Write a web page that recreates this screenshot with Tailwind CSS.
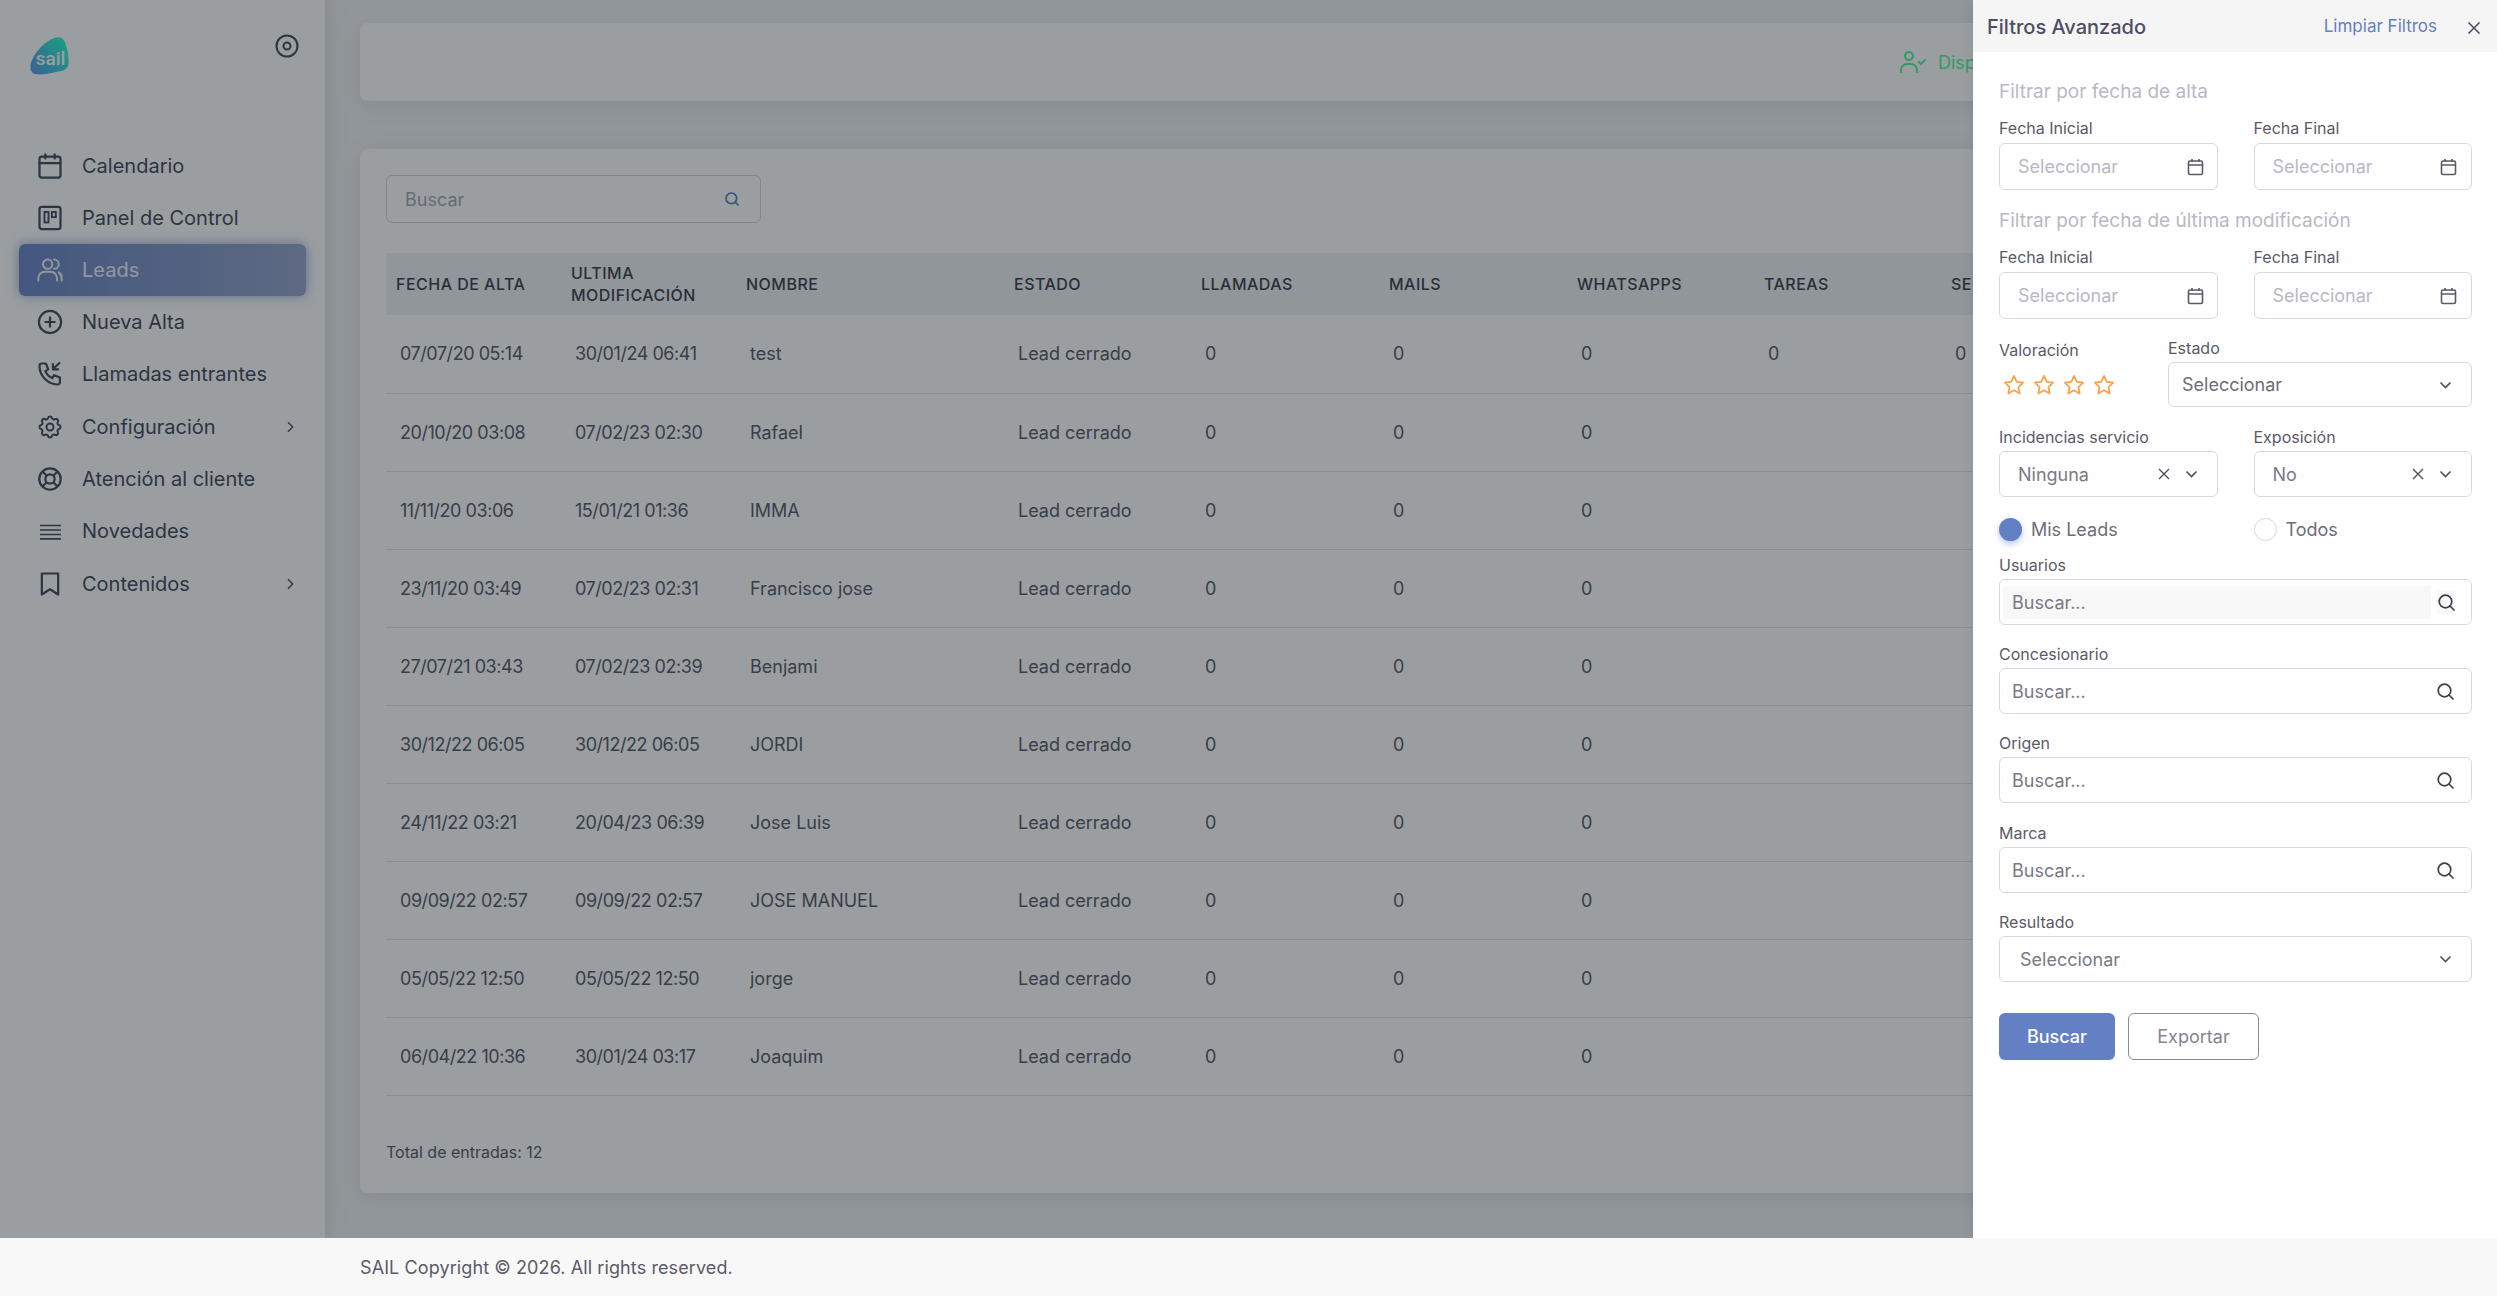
<!DOCTYPE html>
<html lang="es">
<head>
    <meta charset="UTF-8">
    <title>SAIL - Leads</title>
    <script src="https://cdn.jsdelivr.net/npm/@tailwindcss/browser@4"></script>
</head>
<body class="font-['Inter',sans-serif] text-[#4a5060] bg-white">
<div class="flex flex-col h-screen w-full overflow-hidden">
    <div class="relative flex-1 flex overflow-hidden min-h-0">
        <!-- sidebar -->
        <aside class="w-[325px] shrink-0 bg-white shadow-[0_0_30px_rgba(0,0,0,0.06)] z-10">
            <div class="flex justify-between pl-[30px] pr-[26px] pt-[34px] h-[140px]">
                <svg class="mt-[3px]" width="39" height="38" viewBox="0 0 39 38">
                    <defs><linearGradient id="lg" x1="0" y1="1" x2="1" y2="0.3"><stop offset="0" stop-color="#6496e7"/><stop offset="1" stop-color="#2bfad5"/></linearGradient></defs>
                    <path d="M0.5 28 C2 19 12 6 24 1 C30 -1 34 1 36 8 C38 15 39.5 24 38 29 C36.5 33 32 34 26 35 C18 37 10 38 5 37 C1.5 36 0 33 0.5 28 Z" fill="url(#lg)"/>
                    <text x="20.5" y="28" text-anchor="middle" font-family="Roboto, sans-serif" font-size="19" font-weight="500" fill="#fff">sail</text>
                </svg>
                <svg width="24" height="24" viewBox="0 0 24 24" fill="none" stroke="#4a5060" stroke-width="2"><circle cx="12" cy="12" r="10.5"/><circle cx="12" cy="12" r="3.5"/></svg>
            </div>
            <nav class="flex flex-col text-[20px] px-[19px] pt-0">
                <a class="flex items-center h-[52px] pl-[17px]"><svg class="w-[28px] h-[28px] mr-[18px]" viewBox="0 0 24 24" fill="none" stroke="currentColor" stroke-width="1.9" stroke-linecap="round"><rect x="3" y="4" width="18" height="18" rx="2"/><path d="M3 9.5h18M8 2v3.5M16 2v3.5"/></svg>Calendario</a>
                <a class="flex items-center h-[52px] pl-[17px]"><svg class="w-[28px] h-[28px] mr-[18px]" viewBox="0 0 24 24" fill="none" stroke="currentColor" stroke-width="1.9"><rect x="3" y="2.5" width="18" height="19" rx="2"/><rect x="7.3" y="6.8" width="3.4" height="9" stroke-width="1.6"/><rect x="13.6" y="6.8" width="3.4" height="4.5" stroke-width="1.6"/></svg>Panel de Control</a>
                <a class="flex items-center h-[52px] pl-[17px] rounded-md bg-gradient-to-r from-[#7189c6] to-[#9aa8cc] text-white/90 shadow-[0_0_12px_rgba(113,137,198,0.7)]"><svg class="w-[28px] h-[28px] mr-[18px]" viewBox="0 0 24 24" fill="none" stroke="currentColor" stroke-width="1.7" stroke-linecap="round"><circle cx="10" cy="7" r="4"/><path d="M2 21v-2a5.5 5.5 0 0 1 5.5-5.5h5a5.5 5.5 0 0 1 5.5 5.5v2M15.5 3a4 4 0 0 1 0 8M19.5 14a5.5 5.5 0 0 1 2.5 5v2"/></svg>Leads</a>
                <a class="flex items-center h-[52px] pl-[17px]"><svg class="w-[28px] h-[28px] mr-[18px]" viewBox="0 0 24 24" fill="none" stroke="currentColor" stroke-width="1.9" stroke-linecap="round"><circle cx="12" cy="12" r="9.5"/><path d="M12 8v8M8 12h8"/></svg>Nueva Alta</a>
                <a class="flex items-center h-[52px] pl-[17px]"><svg class="w-[28px] h-[28px] mr-[18px]" viewBox="0 0 24 24" fill="none" stroke="currentColor" stroke-width="1.9" stroke-linecap="round" stroke-linejoin="round"><path d="M5 3h3.5l2 5-2.500 1.5a11 11 0 0 0 6 6l1.500-2.500 5 2v3.500a2 2 0 0 1-2 2.500A16 16 0 0 1 3 5a2 2 0 0 1 2-2"/><path d="M20 2.500l-5.500 5.500M14.500 3.500V8H19"/></svg>Llamadas entrantes</a>
                <a class="flex items-center h-[52px] mt-[1px] pl-[17px]"><svg class="w-[28px] h-[28px] mr-[18px]" viewBox="0 0 24 24" fill="none" stroke="currentColor" stroke-width="1.7" stroke-linecap="round" stroke-linejoin="round"><path d="M10.3 4.3c.4-1.8 3-1.8 3.4 0a1.7 1.7 0 0 0 2.6 1c1.5-.9 3.3.8 2.4 2.4a1.7 1.7 0 0 0 1 2.6c1.8.4 1.8 3 0 3.4a1.7 1.7 0 0 0-1 2.6c.9 1.5-.8 3.3-2.4 2.4a1.7 1.7 0 0 0-2.6 1c-.4 1.8-3 1.8-3.4 0a1.7 1.7 0 0 0-2.6-1c-1.5.9-3.3-.8-2.4-2.4a1.7 1.7 0 0 0-1-2.6c-1.8-.4-1.8-3 0-3.4a1.7 1.7 0 0 0 1-2.6c-.9-1.5.8-3.3 2.4-2.4a1.7 1.7 0 0 0 2.6-1"/><circle cx="12" cy="12" r="3"/></svg>Configuración<svg class="ml-auto mr-[8px] w-[16px] h-[16px]" viewBox="0 0 24 24" fill="none" stroke="currentColor" stroke-width="2"><path d="M9 5l7 7-7 7"/></svg></a>
                <a class="flex items-center h-[52px] pl-[17px]"><svg class="w-[28px] h-[28px] mr-[18px]" viewBox="0 0 24 24" fill="none" stroke="currentColor" stroke-width="1.9"><circle cx="12" cy="12" r="9.2"/><circle cx="12" cy="12" r="4"/><path d="M5.5 5.5l3.700 3.700M18.500 5.500l-3.700 3.700M5.500 18.500l3.700-3.700M18.500 18.500l-3.700-3.700"/></svg>Atención al cliente</a>
                <a class="flex items-center h-[52px] pl-[17px]"><svg class="w-[28px] h-[28px] mr-[18px]" viewBox="0 0 24 24" fill="none" stroke="currentColor" stroke-width="1.4"><path d="M3.4 7.300h18M3.400 11.100h18M3.400 15h18M3.400 18.800h18"/></svg>Novedades</a>
                <a class="flex items-center h-[53px] pl-[17px]"><svg class="w-[28px] h-[28px] mr-[18px]" viewBox="0 0 24 24" fill="none" stroke="currentColor" stroke-width="1.9" stroke-linejoin="round"><path d="M5 3h14v18l-7-4.500L5 21z"/></svg>Contenidos<svg class="ml-auto mr-[8px] w-[16px] h-[16px]" viewBox="0 0 24 24" fill="none" stroke="currentColor" stroke-width="2"><path d="M9 5l7 7-7 7"/></svg></a>
            </nav>
        </aside>

        <!-- main -->
        <main class="flex-1 min-w-0 bg-[#f1f2f3] pl-[35px] pt-[23px] shadow-[inset_12px_0_12px_-10px_rgba(0,0,0,0.05)]">
            <div class="h-[78px] w-[2200px] rounded-lg bg-white shadow-[0_4px_24px_rgba(0,0,0,0.08)] flex items-center pl-[1540px] text-[#52f896] text-[18px]">
                <svg class="w-[26px] h-[24px] mr-[12px]" viewBox="0 0 26 24" fill="none" stroke="currentColor" stroke-width="2" stroke-linecap="round"><circle cx="9" cy="6" r="4"/><path d="M1 22v-2a6 6 0 0 1 6-6h4a6 6 0 0 1 6 6v2M19 12l2 2 4-4"/></svg>Disponible
            </div>
            <div class="mt-[48px] h-[1044px] w-[2200px] rounded-lg bg-white shadow-[0_4px_24px_rgba(0,0,0,0.08)] px-[26px] pt-[26px]">
                <div class="w-[375px] h-[48px] border border-[#d6d8dc] rounded-md flex items-center justify-between pl-[18px] pr-[20px] text-[#a8acb3] text-[18px]">Buscar
                    <svg class="w-[16px] h-[16px] text-[#5f7fc5]" viewBox="0 0 24 24" fill="none" stroke="currentColor" stroke-width="2.5" stroke-linecap="round"><circle cx="11" cy="11" r="8"/><path d="M21 21l-4-4"/></svg>
                </div>
                <table class="mt-[30px] table-fixed w-[1742px] border-collapse text-left text-[18px] text-[#5c616b]">
                    <colgroup><col class="w-[175px]"><col class="w-[175px]"><col class="w-[268px]"><col class="w-[187px]"><col class="w-[188px]"><col class="w-[188px]"><col class="w-[187px]"><col class="w-[187px]"><col class="w-[187px]"></colgroup>
                    <thead class="bg-[#f1f2f3] text-[16px] leading-[22px] text-[#444750] uppercase tracking-[0.03em]">
                        <tr class="h-[62px]">
                            <th class="font-medium pl-[10px]">Fecha de alta</th><th class="font-medium pl-[10px]">Ultima modificación</th><th class="font-medium pl-[10px]">Nombre</th><th class="font-medium pl-[10px]">Estado</th><th class="font-medium pl-[10px]">Llamadas</th><th class="font-medium pl-[10px]">Mails</th><th class="font-medium pl-[10px]">Whatsapps</th><th class="font-medium pl-[10px]">Tareas</th><th class="font-medium pl-[10px]">Seg</th>
                        </tr>
                    </thead>
                    <tbody class="[&_td]:pl-[14px] [&_td:nth-child(-n+2)]:tracking-[-0.45px] [&_tr]:h-[78px] [&_tr]:border-b [&_tr]:border-[#e4e5e8]">
                        <tr><td>07/07/20 05:14</td><td>30/01/24 06:41</td><td>test</td><td>Lead cerrado</td><td>0</td><td>0</td><td>0</td><td>0</td><td>0</td></tr>
                        <tr><td>20/10/20 03:08</td><td>07/02/23 02:30</td><td>Rafael</td><td>Lead cerrado</td><td>0</td><td>0</td><td>0</td><td></td><td></td></tr>
                        <tr><td>11/11/20 03:06</td><td>15/01/21 01:36</td><td>IMMA</td><td>Lead cerrado</td><td>0</td><td>0</td><td>0</td><td></td><td></td></tr>
                        <tr><td>23/11/20 03:49</td><td>07/02/23 02:31</td><td>Francisco jose</td><td>Lead cerrado</td><td>0</td><td>0</td><td>0</td><td></td><td></td></tr>
                        <tr><td>27/07/21 03:43</td><td>07/02/23 02:39</td><td>Benjami</td><td>Lead cerrado</td><td>0</td><td>0</td><td>0</td><td></td><td></td></tr>
                        <tr><td>30/12/22 06:05</td><td>30/12/22 06:05</td><td>JORDI</td><td>Lead cerrado</td><td>0</td><td>0</td><td>0</td><td></td><td></td></tr>
                        <tr><td>24/11/22 03:21</td><td>20/04/23 06:39</td><td>Jose Luis</td><td>Lead cerrado</td><td>0</td><td>0</td><td>0</td><td></td><td></td></tr>
                        <tr><td>09/09/22 02:57</td><td>09/09/22 02:57</td><td>JOSE MANUEL</td><td>Lead cerrado</td><td>0</td><td>0</td><td>0</td><td></td><td></td></tr>
                        <tr><td>05/05/22 12:50</td><td>05/05/22 12:50</td><td>jorge</td><td>Lead cerrado</td><td>0</td><td>0</td><td>0</td><td></td><td></td></tr>
                        <tr><td>06/04/22 10:36</td><td>30/01/24 03:17</td><td>Joaquim</td><td>Lead cerrado</td><td>0</td><td>0</td><td>0</td><td></td><td></td></tr>
                    </tbody>
                </table>
                <p class="mt-[44px] text-[16px] leading-[24px] text-[#5c616b]">Total de entradas: 12</p>
            </div>
        </main>

        <!-- backdrop -->
        <div class="absolute inset-0 bg-[#020c14]/40 z-20"></div>

        <!-- filtros drawer -->
        <div class="absolute right-0 top-0 bottom-0 w-[524px] bg-white z-30 text-[#5b5a66] shadow-[0_0_10px_rgba(0,0,0,0.08)]">
            <div class="h-[52px] bg-[#f5f5f5] flex items-center pl-[14px] pr-[16px] pt-[1px]">
                <span class="text-[20px] font-medium text-[#4f4d63]">Filtros Avanzado</span>
                <span class="ml-auto text-[17px] text-[#6480c4]">Limpiar Filtros</span>
                <svg class="ml-[30px] mt-[2px] w-[14px] h-[14px]" viewBox="0 0 14 14" fill="none" stroke="#4f4d63" stroke-width="1.6"><path d="M1.5 1.5l11 11M12.5 1.5l-11 11"/></svg>
            </div>
            <div class="pl-[26px] pr-[25px] pt-[26px] text-[16px]">
                <div class="h-7 leading-7 text-[19px] text-[#b9b8c3]">Filtrar por fecha de alta</div>
                <div class="grid grid-cols-2 gap-x-[36px] mt-[11px]">
                    <div>
                        <label class="block h-[22px] leading-[22px]">Fecha Inicial</label>
                        <div class="mt-[4px] h-[47px] border border-[#d8d8e0] rounded-md flex items-center justify-between pl-[18px] pr-[13px] text-[18px] text-[#b9b8c3]">Seleccionar<svg class="w-[17px] h-[18px]" viewBox="0 0 17 18" fill="none" stroke="#5b5a66" stroke-width="1.6"><rect x="1.5" y="3" width="14" height="13.5" rx="1.5"/><path d="M1.5 7h14M5 1v3M12 1v3"/></svg></div>
                    </div>
                    <div>
                        <label class="block h-[22px] leading-[22px]">Fecha Final</label>
                        <div class="mt-[4px] h-[47px] border border-[#d8d8e0] rounded-md flex items-center justify-between pl-[18px] pr-[14px] text-[18px] text-[#b9b8c3]">Seleccionar<svg class="w-[17px] h-[18px]" viewBox="0 0 17 18" fill="none" stroke="#5b5a66" stroke-width="1.6"><rect x="1.5" y="3" width="14" height="13.5" rx="1.5"/><path d="M1.5 7h14M5 1v3M12 1v3"/></svg></div>
                    </div>
                </div>
                <div class="h-7 leading-7 mt-[17px] text-[19px] text-[#b9b8c3]">Filtrar por fecha de última modificación</div>
                <div class="grid grid-cols-2 gap-x-[36px] mt-[11px]">
                    <div>
                        <label class="block h-[22px] leading-[22px]">Fecha Inicial</label>
                        <div class="mt-[4px] h-[47px] border border-[#d8d8e0] rounded-md flex items-center justify-between pl-[18px] pr-[13px] text-[18px] text-[#b9b8c3]">Seleccionar<svg class="w-[17px] h-[18px]" viewBox="0 0 17 18" fill="none" stroke="#5b5a66" stroke-width="1.6"><rect x="1.5" y="3" width="14" height="13.5" rx="1.5"/><path d="M1.5 7h14M5 1v3M12 1v3"/></svg></div>
                    </div>
                    <div>
                        <label class="block h-[22px] leading-[22px]">Fecha Final</label>
                        <div class="mt-[4px] h-[47px] border border-[#d8d8e0] rounded-md flex items-center justify-between pl-[18px] pr-[14px] text-[18px] text-[#b9b8c3]">Seleccionar<svg class="w-[17px] h-[18px]" viewBox="0 0 17 18" fill="none" stroke="#5b5a66" stroke-width="1.6"><rect x="1.5" y="3" width="14" height="13.5" rx="1.5"/><path d="M1.5 7h14M5 1v3M12 1v3"/></svg></div>
                    </div>
                </div>
                <div class="flex mt-[18px]">
                    <div class="w-[169px] pt-[2px]">
                        <label class="block h-[22px] leading-[22px]">Valoración</label>
                        <div class="flex gap-[8px] mt-[13px] pl-[4px]">
                            <svg class="w-[22px] h-[22px]" viewBox="0 0 24 24" fill="none" stroke="#f9a14a" stroke-width="1.9" stroke-linejoin="round"><path d="M12 2l3 6.6 7 .8-5.2 4.8 1.4 7.1L12 17.8l-6.2 3.500 1.400-7.100L2 9.400l7-.8z"/></svg>
                            <svg class="w-[22px] h-[22px]" viewBox="0 0 24 24" fill="none" stroke="#f9a14a" stroke-width="1.9" stroke-linejoin="round"><path d="M12 2l3 6.6 7 .8-5.2 4.8 1.4 7.1L12 17.8l-6.2 3.500 1.400-7.100L2 9.400l7-.8z"/></svg>
                            <svg class="w-[22px] h-[22px]" viewBox="0 0 24 24" fill="none" stroke="#f9a14a" stroke-width="1.9" stroke-linejoin="round"><path d="M12 2l3 6.6 7 .8-5.2 4.8 1.4 7.1L12 17.8l-6.2 3.500 1.400-7.100L2 9.400l7-.8z"/></svg>
                            <svg class="w-[22px] h-[22px]" viewBox="0 0 24 24" fill="none" stroke="#f9a14a" stroke-width="1.9" stroke-linejoin="round"><path d="M12 2l3 6.6 7 .8-5.2 4.8 1.4 7.1L12 17.8l-6.2 3.500 1.400-7.100L2 9.400l7-.8z"/></svg>
                        </div>
                    </div>
                    <div class="flex-1">
                        <label class="block h-[22px] leading-[22px]">Estado</label>
                        <div class="mt-[3px] h-[45px] border border-[#d8d8e0] rounded-md flex items-center justify-between pl-[13px] pr-[19px] text-[18px] text-[#6e6d78]">Seleccionar<svg class="w-[13px] h-[8px]" viewBox="0 0 13 8" fill="none" stroke="#4f4d63" stroke-width="1.6"><path d="M1.5 1.5l5 5 5-5"/></svg></div>
                    </div>
                </div>
                <div class="grid grid-cols-2 gap-x-[36px] mt-[19px]">
                    <div>
                        <label class="block h-[22px] leading-[22px]">Incidencias servicio</label>
                        <div class="mt-[3px] h-[46px] border border-[#d8d8e0] rounded-md flex items-center pl-[18px] pr-[19px] text-[18px] text-[#7a7985]">Ninguna<svg class="ml-auto mr-[15px] w-[12px] h-[12px]" viewBox="0 0 12 12" fill="none" stroke="#4f4d63" stroke-width="1.4"><path d="M1 1l10 10M11 1L1 11"/></svg><svg class="w-[13px] h-[8px]" viewBox="0 0 13 8" fill="none" stroke="#4f4d63" stroke-width="1.6"><path d="M1.5 1.5l5 5 5-5"/></svg></div>
                    </div>
                    <div>
                        <label class="block h-[22px] leading-[22px]">Exposición</label>
                        <div class="mt-[3px] h-[46px] border border-[#d8d8e0] rounded-md flex items-center pl-[18px] pr-[19px] text-[18px] text-[#7a7985]">No<svg class="ml-auto mr-[15px] w-[12px] h-[12px]" viewBox="0 0 12 12" fill="none" stroke="#4f4d63" stroke-width="1.4"><path d="M1 1l10 10M11 1L1 11"/></svg><svg class="w-[13px] h-[8px]" viewBox="0 0 13 8" fill="none" stroke="#4f4d63" stroke-width="1.6"><path d="M1.5 1.5l5 5 5-5"/></svg></div>
                    </div>
                </div>
                <div class="grid grid-cols-2 gap-x-[36px] mt-[19px] h-[23px] text-[18px] text-[#6e6d78]">
                    <div class="flex items-center gap-[9px]"><span class="w-[23px] h-[23px] rounded-full bg-[#6480c4] shadow-[0_3px_6px_rgba(100,128,196,0.45)]"></span>Mis Leads</div>
                    <div class="flex items-center gap-[9px]"><span class="w-[23px] h-[23px] rounded-full border border-[#d8d8e0]"></span>Todos</div>
                </div>
                <div class="mt-[15px]">
                    <label class="block h-[22px] leading-[22px]">Usuarios</label>
                    <div class="mt-[3px] h-[46px] border border-[#d8d8e0] rounded-md flex items-center pl-[3px] pr-[15px] text-[18px] text-[#7a7985]">
                        <span class="flex-1 h-[33px] bg-[#f8f8f8] flex items-center pl-[9px]">Buscar...</span>
                        <span class="ml-[6px] w-[19px] h-[24px] bg-[#f8f8f8] flex items-center justify-center"><svg class="w-[17px] h-[17px] shrink-0" viewBox="0 0 17 17" fill="none" stroke="#3f3e4c" stroke-width="1.7" stroke-linecap="round"><circle cx="7.5" cy="7.5" r="6.3"/><path d="M16 16l-4-4"/></svg></span>
                    </div>
                </div>
                <div class="mt-[18px]">
                    <label class="block h-[22px] leading-[22px]">Concesionario</label>
                    <div class="mt-[3px] h-[46px] border border-[#d8d8e0] rounded-md flex items-center justify-between pl-[12px] pr-[17px] text-[18px] text-[#7a7985]">Buscar...<svg class="w-[17px] h-[17px]" viewBox="0 0 17 17" fill="none" stroke="#3f3e4c" stroke-width="1.7" stroke-linecap="round"><circle cx="7.5" cy="7.5" r="6.3"/><path d="M16 16l-4-4"/></svg></div>
                </div>
                <div class="mt-[18px]">
                    <label class="block h-[22px] leading-[22px]">Origen</label>
                    <div class="mt-[3px] h-[46px] border border-[#d8d8e0] rounded-md flex items-center justify-between pl-[12px] pr-[17px] text-[18px] text-[#7a7985]">Buscar...<svg class="w-[17px] h-[17px]" viewBox="0 0 17 17" fill="none" stroke="#3f3e4c" stroke-width="1.7" stroke-linecap="round"><circle cx="7.5" cy="7.5" r="6.3"/><path d="M16 16l-4-4"/></svg></div>
                </div>
                <div class="mt-[19px]">
                    <label class="block h-[22px] leading-[22px]">Marca</label>
                    <div class="mt-[3px] h-[46px] border border-[#d8d8e0] rounded-md flex items-center justify-between pl-[12px] pr-[17px] text-[18px] text-[#7a7985]">Buscar...<svg class="w-[17px] h-[17px]" viewBox="0 0 17 17" fill="none" stroke="#3f3e4c" stroke-width="1.7" stroke-linecap="round"><circle cx="7.5" cy="7.5" r="6.3"/><path d="M16 16l-4-4"/></svg></div>
                </div>
                <div class="mt-[18px]">
                    <label class="block h-[22px] leading-[22px]">Resultado</label>
                    <div class="mt-[3px] h-[46px] border border-[#d8d8e0] rounded-md flex items-center justify-between pl-[20px] pr-[19px] text-[18px] text-[#7a7985]">Seleccionar<svg class="w-[13px] h-[8px]" viewBox="0 0 13 8" fill="none" stroke="#4f4d63" stroke-width="1.6"><path d="M1.5 1.5l5 5 5-5"/></svg></div>
                </div>
                <div class="flex gap-[13px] mt-[31px] text-[18px]">
                    <button class="w-[116px] h-[47px] rounded-md bg-[#6480c4] text-white font-medium">Buscar</button>
                    <button class="w-[131px] h-[47px] rounded-md border border-[#8a8a90] text-[#85848f]">Exportar</button>
                </div>
            </div>
        </div>
    </div>
    <footer class="h-[58px] shrink-0 bg-[#f8f8f8] flex items-center pl-[360px] text-[18px] tracking-[0.1px] text-[#5b5a66]">SAIL Copyright © 2026. All rights reserved.</footer>
</div>
</body>
</html>
